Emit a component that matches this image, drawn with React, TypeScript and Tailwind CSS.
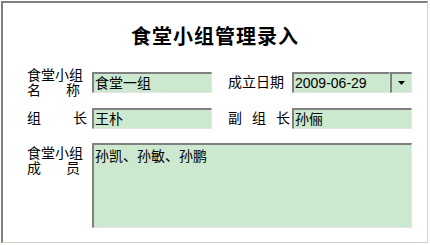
import React from "react";

const font = { fontFamily: "'Liberation Sans','Noto Sans CJK SC',sans-serif" };

// 凹陷输入框样式（经典 Windows 风格）
const sunken =
  "border-t-2 border-l-2 border-t-[#808080] border-l-[#808080] border-r border-b border-r-[#e4e4e4] border-b-[#e4e4e4] bg-[#cce8cf]";

function Field({ value, className = "" }: { value: string; className?: string }) {
  return (
    <div className={`${sunken} h-[21px] pl-px text-[14px] leading-[18px] text-black ${className}`}>
      {value}
    </div>
  );
}

export default function App() {
  return (
    <div className="w-[430px] h-[245px] bg-white" style={font}>
      <div className="ml-px mt-px w-[427px] h-[242px] border-t-2 border-l-2 border-t-[#808080] border-l-[#808080] border-r border-b border-r-[#d4d0c8] border-b-[#d4d0c8]">
        {/* 标题 */}
        <h1 className="mt-[24px] h-[20px] text-center text-[20px] leading-[20px] font-bold tracking-[1px] text-black">
          食堂小组管理录入
        </h1>

        {/* 第一行：名称 + 成立日期 */}
        <div className="mt-[21px] pl-[24px] flex items-start text-[14px] leading-[15px] text-black">
          <div className="w-[65px]">
            <div>食堂小组</div>
            <div className="w-[53px] flex justify-between">
              <span>名</span>
              <span>称</span>
            </div>
          </div>
          <Field value="食堂一组" className="mt-[4px] w-[120px]" />
          <div className="ml-[16px] w-[64px] mt-[7px]">成立日期</div>
          <div className="mt-[4px] flex">
            <Field value="2009-06-29" className="w-[98px]" />
            <div className={`${sunken} w-[22px] h-[21px] flex items-center justify-center`}>
              <svg width="7" height="4" viewBox="0 0 7 4">
                <path d="M0 0h7L3.5 4z" fill="#000" />
              </svg>
            </div>
          </div>
        </div>

        {/* 第二行：组长 + 副组长 */}
        <div className="mt-[10px] pl-[24px] flex items-center text-[14px] leading-[15px] text-black">
          <div className="w-[65px]">
            <div className="w-[60px] flex justify-between">
              <span>组</span>
              <span>长</span>
            </div>
          </div>
          <Field value="王朴" className="w-[120px]" />
          <div className="ml-[16px] w-[64px]">
            <div className="w-[62px] flex justify-between">
              <span>副</span>
              <span>组</span>
              <span>长</span>
            </div>
          </div>
          <Field value="孙俪" className="w-[120px]" />
        </div>

        {/* 第三行：成员 */}
        <div className="mt-[14px] pl-[24px] flex items-start text-[14px] leading-[15px] text-black">
          <div className="w-[65px] mt-[3px]">
            <div>食堂小组</div>
            <div className="w-[53px] flex justify-between">
              <span>成</span>
              <span>员</span>
            </div>
          </div>
          <div className={`${sunken} w-[320px] h-[85px] pl-px pt-[3px] text-[14px] leading-[16px]`}>
            孙凯、孙敏、孙鹏
          </div>
        </div>
      </div>
    </div>
  );
}
